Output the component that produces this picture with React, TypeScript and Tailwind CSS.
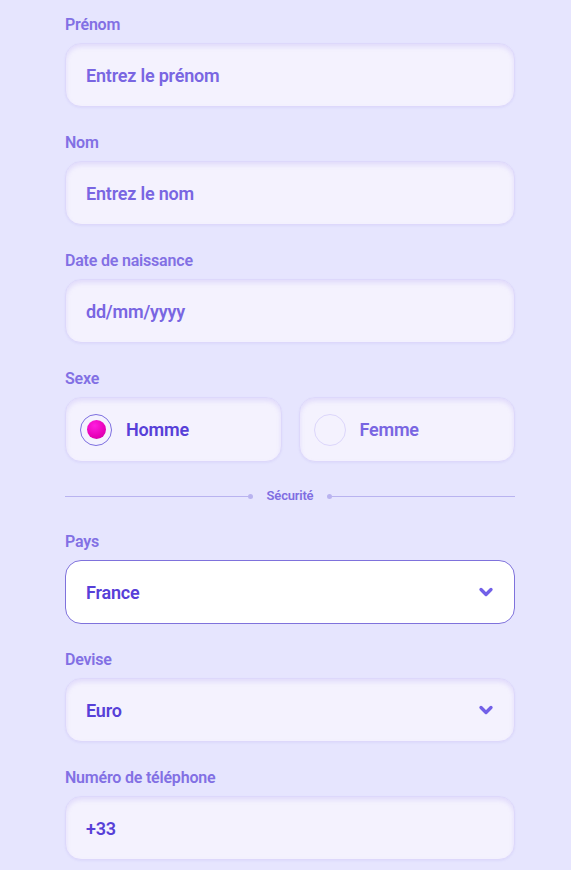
import { ChevronDown } from "lucide-react";

const inputBox =
  "h-16 w-full rounded-2xl border border-[#ddd8fb] bg-[#f4f2fe] px-5 flex items-center text-[18px] font-semibold tracking-[-0.2px] shadow-[inset_0_3px_4px_rgba(170,155,245,0.25),0_1px_2px_rgba(150,140,230,0.12)]";

const Label = ({ children }: { children: string }) => (
  <div className="mb-1.5 text-[16px] leading-6 font-semibold tracking-[-0.2px] text-[#8270e4]">{children}</div>
);

const TextField = ({ label, placeholder, value }: { label: string; placeholder?: string; value?: string }) => (
  <div>
    <Label>{label}</Label>
    <div className={inputBox}>
      {value ? (
        <span className="text-[#5740d8]">{value}</span>
      ) : (
        <span className="text-[#7966e2]">{placeholder}</span>
      )}
    </div>
  </div>
);

const SelectField = ({ label, value, active = false }: { label: string; value: string; active?: boolean }) => (
  <div>
    <Label>{label}</Label>
    <div
      className={
        active
          ? "h-16 w-full rounded-2xl border border-[#7f72dc] bg-white px-5 flex items-center justify-between text-[18px] font-semibold tracking-[-0.2px]"
          : `${inputBox} justify-between`
      }
    >
      <span className="text-[#5740d8]">{value}</span>
      <ChevronDown className="w-5 h-5 text-[#7260e8] -mr-0.5" strokeWidth={4} />
    </div>
  </div>
);

const Radio = ({ label, checked }: { label: string; checked?: boolean }) => (
  <div className={`${inputBox} h-[65px] gap-[14px] px-[14px]`}>
    <span
      className={`w-8 h-8 rounded-full flex items-center justify-center ${
        checked ? "border border-[#7d6fe0]" : "border border-[#dcd6fb]"
      }`}
    >
      {checked && (
        <span className="w-[19px] h-[19px] rounded-full bg-[radial-gradient(circle_at_40%_30%,#ff1ee0,#e800b8_60%,#c4009c)]" />
      )}
    </span>
    <span className={checked ? "text-[#5740d8]" : "text-[#7966e2]"}>{label}</span>
  </div>
);

export default function App() {
  return (
    <div
      className="min-h-[870px] w-full bg-[#e6e5fe] pt-[13px] pb-4 pl-[65px]"
      style={{ fontFamily: "Roboto, 'Noto Sans', sans-serif" }}
    >
      <div className="w-[450px] space-y-6">
        <TextField label="Prénom" placeholder="Entrez le prénom" />
        <TextField label="Nom" placeholder="Entrez le nom" />
        <TextField label="Date de naissance" placeholder="dd/mm/yyyy" />

        <div>
          <Label>Sexe</Label>
          <div className="grid grid-cols-2 gap-[17px]">
            <Radio label="Homme" checked />
            <Radio label="Femme" />
          </div>
        </div>

        <div className="flex items-center h-[20px]">
          <div className="flex-1 h-px bg-[#b9b3f0]" />
          <span className="w-[5px] h-[5px] rounded-full bg-[#b9b3f0]" />
          <span className="px-[14px] text-[13px] font-semibold tracking-[-0.2px] text-[#7f6ee2]">Sécurité</span>
          <span className="w-[5px] h-[5px] rounded-full bg-[#b9b3f0]" />
          <div className="flex-1 h-px bg-[#b9b3f0]" />
        </div>

        <SelectField label="Pays" value="France" active />
        <SelectField label="Devise" value="Euro" />
        <TextField label="Numéro de téléphone" value="+33" />
      </div>
    </div>
  );
}
